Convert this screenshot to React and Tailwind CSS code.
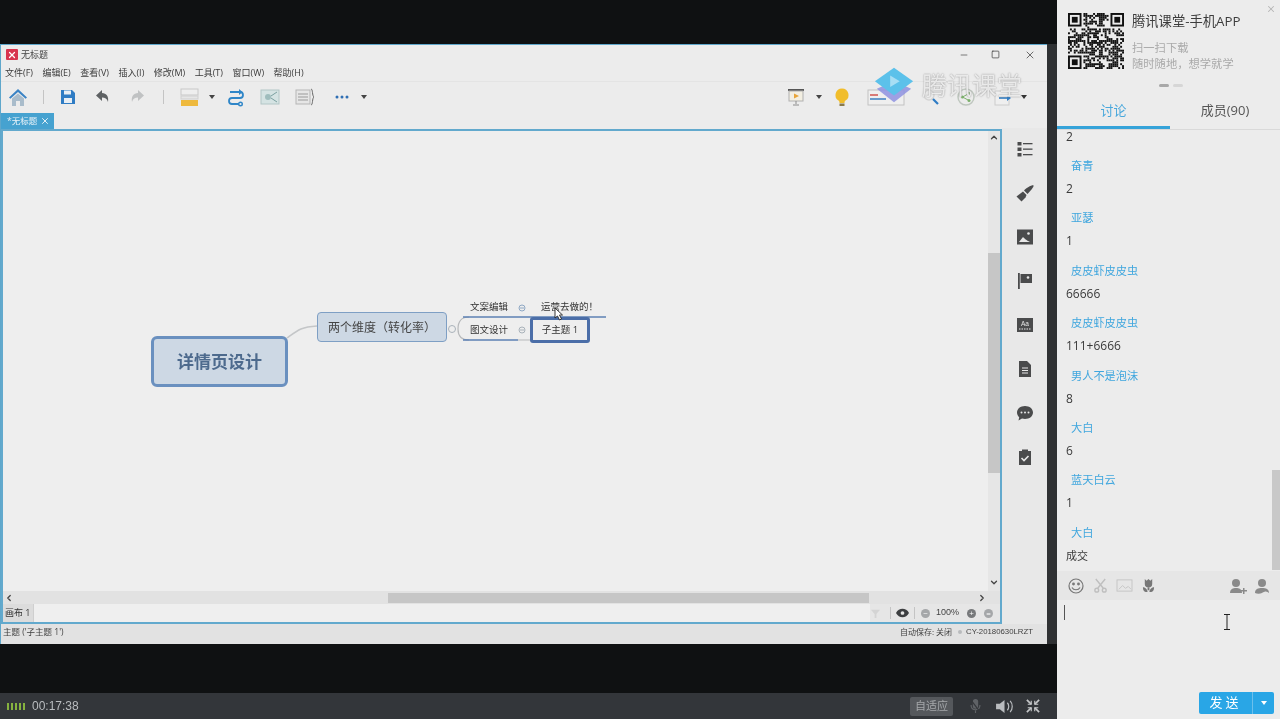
import React from 'react';
import { X, Minus, Square, ChevronUp, ChevronDown, ChevronLeft, ChevronRight } from 'lucide-react';

const messages = [
  { name: '奋青', text: '2' },
  { name: '亚瑟', text: '1' },
  { name: '皮皮虾皮皮虫', text: '66666' },
  { name: '皮皮虾皮皮虫', text: '111+6666' },
  { name: '男人不是泡沫', text: '8' },
  { name: '大白', text: '6' },
  { name: '蓝天白云', text: '1' },
  { name: '大白', text: '成交', cjk: true },
];

const menus = ['文件(F)', '编辑(E)', '查看(V)', '插入(I)', '修改(M)', '工具(T)', '窗口(W)', '帮助(H)'];

// pseudo random modules for the qr code
function QrCode() {
  const n = 29;
  const cells = [];
  let seed = 73;
  for (let y = 0; y < n; y++) {
    for (let x = 0; x < n; x++) {
      seed = (seed * 1103515245 + 12345) & 0x7fffffff;
      const inFinder = (x < 8 && y < 8) || (x > n - 9 && y < 8) || (x < 8 && y > n - 9);
      if (!inFinder && (seed >> 16) % 100 < 54) cells.push(<rect key={x + '-' + y} x={x} y={y} width="1" height="1" />);
    }
  }
  const finder = (x, y) => (
    <g key={x + '' + y}>
      <rect x={x} y={y} width="7" height="7" />
      <rect x={x + 1} y={y + 1} width="5" height="5" fill="#ececec" />
      <rect x={x + 2} y={y + 2} width="3" height="3" />
    </g>
  );
  return (
    <svg viewBox="0 0 29 29" className="w-[56px] h-[56px] shrink-0" fill="#111">
      {cells}
      {finder(0, 0)}
      {finder(22, 0)}
      {finder(0, 22)}
    </svg>
  );
}

function ToolIcon({ children, w = 22 }) {
  return (
    <svg viewBox={`0 0 ${w} 22`} width={w} height={22} className="shrink-0">
      {children}
    </svg>
  );
}

function Caret({ color = '#444' }) {
  return (
    <svg viewBox="0 0 6 4" className="w-[6px] h-[4px] shrink-0">
      <path d="M0 0h6L3 4z" fill={color} />
    </svg>
  );
}

function Toolbar() {
  return (
    <div className="h-[30px] flex items-center pl-[6px] pr-[20px] pb-[1px]">
      <ToolIcon>
        <path d="M11 3 2 11.5l1.400 1.200L11 6l7.600 6.700 1.400-1.200z" fill="#3a83c4" />
        <path d="M5 12.500 11 7.500l6 5V20h-4v-5H9v5H5z" fill="#a9bccb" />
      </ToolIcon>
      <div className="w-px h-[14px] bg-[#c4c4c4] ml-[14px]" />
      <div className="ml-[13px]">
        <ToolIcon>
          <path d="M4 4h11l3 3v11H4z" fill="#2f7cc4" />
          <rect x="7" y="4.500" width="7" height="4" fill="#e8eef4" />
          <rect x="7" y="12" width="8" height="5" fill="#e8eef4" />
        </ToolIcon>
      </div>
      <div className="ml-[13px]">
        <ToolIcon>
          <path d="M10 4 4 9.500l6 5.500v-3.400c3 0 5 1 6 4.400 1-5.500-1.500-8.600-6-9z" fill="#5f6264" />
        </ToolIcon>
      </div>
      <div className="ml-[12px]">
        <ToolIcon>
          <path d="M12 4l6 5.500-6 5.500v-3.400c-3 0-5 1-6 4.400-1-5.500 1.500-8.600 6-9z" fill="#c0c2c3" />
        </ToolIcon>
      </div>
      <div className="w-px h-[14px] bg-[#c4c4c4] ml-[15px]" />
      <div className="ml-[15px]">
        <ToolIcon>
          <rect x="2" y="3" width="17" height="6" fill="#eeeeee" stroke="#c8c8c8" />
          <rect x="2" y="10" width="17" height="3" fill="#e6e6e6" stroke="#cfcfcf" />
          <rect x="2" y="14" width="17" height="6" fill="#eeb93d" />
        </ToolIcon>
      </div>
      <div className="ml-[8px]"><Caret /></div>
      <div className="ml-[10px]">
        <ToolIcon>
          <path d="M5 6h10a3 3 0 0 1 0 6H7a3 3 0 0 0 0 6h7" fill="none" stroke="#2f86c8" strokeWidth="1.800" />
          <path d="M14 3l3.500 3-3.500 3z" fill="#2f86c8" />
          <circle cx="15.500" cy="18" r="1.800" fill="none" stroke="#2f86c8" strokeWidth="1.400" />
        </ToolIcon>
      </div>
      <div className="ml-[12px]">
        <ToolIcon>
          <rect x="2" y="4" width="18" height="14" fill="#d5e3e3" stroke="#b2c6c6" />
          <circle cx="9" cy="11" r="3" fill="#9fbdbd" />
          <path d="M12 10l6-4M12 12l6 4" stroke="#7ba0a0" />
        </ToolIcon>
      </div>
      <div className="ml-[14px]">
        <ToolIcon>
          <rect x="1" y="4" width="14" height="14" fill="#e6e6e6" stroke="#b5b5b5" />
          <path d="M3 8h10M3 11h10M3 14h10" stroke="#9a9a9a" />
          <path d="M16 3c2 0 1 7 3 8-2 1-1 8-3 8" fill="none" stroke="#666" />
        </ToolIcon>
      </div>
      <div className="ml-[14px]">
        <ToolIcon>
          <circle cx="6" cy="11" r="1.500" fill="#2f6fb4" />
          <circle cx="11" cy="11" r="1.500" fill="#2f6fb4" />
          <circle cx="16" cy="11" r="1.500" fill="#2f6fb4" />
        </ToolIcon>
      </div>
      <div className="ml-[8px]"><Caret /></div>

      <div className="ml-auto flex items-center">
        <ToolIcon>
          <rect x="3" y="3" width="16" height="2" fill="#555" />
          <rect x="4" y="5" width="14" height="10" fill="#f3efe2" stroke="#b0b0b0" />
          <path d="M9 7.500l5 2.500-5 2.500z" fill="#e8a53a" />
          <path d="M11 15v3M8 19h6" stroke="#8c8c8c" />
        </ToolIcon>
        <div className="ml-[9px]"><Caret /></div>
        <div className="ml-[9px]">
          <ToolIcon>
            <path d="M11 2.500a6.500 6.500 0 0 0-3.500 12c.8.600 1 1.300 1 2.500h5c0-1.200.2-1.900 1-2.500A6.500 6.500 0 0 0 11 2.500z" fill="#f1bd2b" />
            <rect x="8.500" y="17.500" width="5" height="2.500" fill="#8a7a4a" />
          </ToolIcon>
        </div>
        <div className="ml-[14px]">
          <ToolIcon w={38}>
            <rect x="1" y="4" width="36" height="15" fill="#efefef" stroke="#c2c2c2" />
            <path d="M3 9h8" stroke="#d1544f" strokeWidth="1.500" />
            <path d="M3 13h16" stroke="#3d7fc1" strokeWidth="1.500" />
          </ToolIcon>
        </div>
        <div className="ml-[15px]">
          <ToolIcon>
            <circle cx="9" cy="9" r="5" fill="none" stroke="#d4d4d4" strokeWidth="1.500" />
            <path d="M13 13l5 5" stroke="#2f7cc4" strokeWidth="2.200" />
          </ToolIcon>
        </div>
        <div className="ml-[13px]">
          <ToolIcon>
            <circle cx="11" cy="11" r="8" fill="none" stroke="#bfc7bf" strokeWidth="1.500" />
            <circle cx="7.500" cy="11" r="1.500" fill="#7cb06b" />
            <circle cx="14" cy="7.500" r="1.500" fill="#7cb06b" />
            <circle cx="14" cy="14.500" r="1.500" fill="#7cb06b" />
            <path d="M7.500 11 14 7.500M7.500 11 14 14.500" stroke="#7cb06b" />
          </ToolIcon>
        </div>
        <div className="ml-[16px]">
          <ToolIcon>
            <rect x="2" y="5" width="14" height="14" fill="#efefef" stroke="#cccccc" />
            <path d="M6 12h10" stroke="#2f7cc4" strokeWidth="1.600" />
            <path d="M14 9l4 3-4 3z" fill="#2f7cc4" />
          </ToolIcon>
        </div>
        <div className="ml-[6px]"><Caret color="#333" /></div>
      </div>
    </div>
  );
}

function SideIcon({ children }) {
  return (
    <svg viewBox="0 0 18 18" width={18} height={18} fill="#4a4b4c">
      {children}
    </svg>
  );
}

function SidePanel() {
  return (
    <div className="w-[45px] shrink-0 flex flex-col items-center gap-[26px] pt-[12px] -mt-[1px] bg-[#e8e8e8]">
      <SideIcon>
        <rect x="1.500" y="2" width="4" height="3.500" /><rect x="1.500" y="7.500" width="4" height="3.500" /><rect x="1.500" y="13" width="4" height="3.500" />
        <rect x="7" y="3" width="9.500" height="1.300" /><rect x="7" y="8.500" width="9.500" height="1.300" /><rect x="7" y="14" width="9.500" height="1.300" />
      </SideIcon>
      <SideIcon>
        <path d="M17.500 1.500c.8.900-2.500 5-6 8.500L8 6.500c3.500-3.500 8.600-5.900 9.500-5z" />
        <path d="M7 7.500l3.500 3.500-1 2.500-4 4L.500 12.500z" />
      </SideIcon>
      <SideIcon>
        <path d="M1 1.500h16v15H1z" />
        <circle cx="12.500" cy="5.500" r="1.300" fill="#e8e8e8" />
        <path d="M3 14l4-5c2 2 3 3 7 5z" fill="#e8e8e8" />
      </SideIcon>
      <SideIcon>
        <rect x="2" y="1" width="1.800" height="16" />
        <path d="M4.500 2H16v9H4.500z" />
        <circle cx="12" cy="5.500" r="1.300" fill="#e8e8e8" />
      </SideIcon>
      <svg viewBox="0 0 18 18" width={18} height={18}>
        <rect x="1" y="2" width="16" height="14" fill="#4a4b4c" />
        <text x="9" y="9.500" textAnchor="middle" fontSize="6.500" fontFamily="Liberation Sans" fill="#e8e8e8">Aa</text>
        <path d="M3 13h12" stroke="#e8e8e8" strokeDasharray="1.500 1" />
      </svg>
      <SideIcon>
        <path d="M3 1h8l4 4v12H3z" />
        <path d="M6 8h6M6 10.500h6M6 13h6" stroke="#e8e8e8" />
      </SideIcon>
      <SideIcon>
        <path d="M9 2c4.500 0 8 2.800 8 6.500S13.500 15 9 15c-1 0-2-.1-3-.4L2.500 16.500l.7-3.300C1.800 12 1 10.400 1 8.500 1 4.800 4.500 2 9 2z" />
        <circle cx="5.500" cy="8.500" r="1" fill="#e8e8e8" /><circle cx="9" cy="8.500" r="1" fill="#e8e8e8" /><circle cx="12.500" cy="8.500" r="1" fill="#e8e8e8" />
      </SideIcon>
      <SideIcon>
        <path d="M3 3h3V1.500h6V3h3v14H3z" />
        <path d="M5.500 10l2.500 2.500 4.500-4.500" stroke="#e8e8e8" strokeWidth="1.600" fill="none" />
      </SideIcon>
    </div>
  );
}

// nodes sit on a free canvas, so they are placed by coordinate
function MindMap() {
  return (
    <div className="relative flex-1 min-w-0 text-[#333]">
      <svg className="absolute left-0 top-0 w-[700px] h-[300px]" viewBox="0 0 700 300" fill="none">
        <path d="M284 207C295 199 298 196 314 195" stroke="#c4c6c8" strokeWidth="1.500" />
        <path d="M455 198Q455 186 466 186M455 198Q455 209 466 209" stroke="#b7b9bb" strokeWidth="1.200" />
        <path d="M460 186h55" stroke="#5d81b3" strokeWidth="1.500" />
        <path d="M460 209h55" stroke="#5d81b3" strokeWidth="1.500" />
        <path d="M515 186h88" stroke="#5d81b3" strokeWidth="1.500" />
        <path d="M515 209h13" stroke="#b7b9bb" />
        <circle cx="449" cy="198" r="3.500" stroke="#a9b2ba" />
        <circle cx="519" cy="177" r="3" stroke="#8fa8c4" />
        <path d="M517 177h4" stroke="#8fa8c4" />
        <circle cx="519" cy="199" r="3" stroke="#a9b2ba" />
        <path d="M517 199h4" stroke="#a9b2ba" />
      </svg>
      <div className="absolute left-[148px] top-[205px] w-[137px] h-[51px] flex items-center justify-center pt-[1px] rounded-[6px] border-[3px] border-[#6a90bf] bg-[#cdd8e4] text-[17px] font-bold text-[#4d6a8d]">
        详情页设计
      </div>
      <div className="absolute left-[314px] top-[181px] w-[130px] h-[30px] flex items-center justify-center pt-[1px] rounded-[4px] border-[1.500px] border-[#7e9fc4] bg-[#cdd8e4] text-[12px] text-[#444]">
        两个维度（转化率）
      </div>
      <div className="absolute left-[467px] top-[169px] text-[9.500px] leading-[14px]">文案编辑</div>
      <div className="absolute left-[467px] top-[192px] text-[9.500px] leading-[14px]">图文设计</div>
      <div className="absolute left-[538px] top-[169px] text-[9.500px] leading-[14px] whitespace-nowrap">运营去做的！</div>
      <div className="absolute left-[527px] top-[186px] w-[60px] h-[26px] flex items-center justify-center rounded-[3px] border-[3px] border-[#4b6ea8] bg-[#eeeeee] text-[9.500px]">
        子主题 1
      </div>
      <svg className="absolute left-[551px] top-[176px] w-[10px] h-[14px]" viewBox="0 0 10 14">
        <path d="M1 1v10l2.500-2 2 4 2-1-2-4H8.500z" fill="#fff" stroke="#222" strokeWidth="0.900" />
      </svg>
    </div>
  );
}

function Canvas() {
  return (
    <div className="flex-1 min-w-0 flex flex-col border-2 border-[#62a9cd] bg-[#eeeeee]">
      <div className="flex-1 min-h-0 flex">
        <MindMap />
        <div className="w-[12px] shrink-0 flex flex-col items-center bg-[#e6e6e6] pb-[2px]">
          <ChevronUp size={10} strokeWidth={3} className="text-[#444] h-[13px]" />
          <div className="flex-1 w-full pt-[109px] pb-[103px]">
            <div className="w-full h-full bg-[#c6c6c6]" />
          </div>
          <ChevronDown size={10} strokeWidth={3} className="text-[#444] h-[13px]" />
        </div>
      </div>
      <div className="h-[13px] shrink-0 flex items-center bg-[#e2e2e2]">
        <ChevronLeft size={10} strokeWidth={3} className="text-[#444] ml-[1px]" />
        <div className="h-[10px] w-[481px] ml-[374px] bg-[#c6c6c6]" />
        <ChevronRight size={10} strokeWidth={3} className="text-[#444] ml-auto mr-[13px]" />
      </div>
      <div className="h-[18px] shrink-0 flex items-center bg-[#e6e6e6] text-[9px] text-[#333]">
        <div className="w-[30px] h-full pl-[2px] flex items-center bg-[#dcdcdc]">画布 1</div>
        <div className="w-[838px] h-full bg-[#efefef] border-l border-[#cfcfcf]" />
        <svg viewBox="0 0 12 12" className="w-[11px] h-[11px] ml-auto">
          <path d="M1 2h10L7 6.500V11H5V6.500z" fill="#d4d4d4" />
        </svg>
        <div className="w-px h-[12px] bg-[#c4c4c4] ml-[9px]" />
        <svg viewBox="0 0 14 10" className="w-[13px] h-[10px] ml-[5px]">
          <path d="M0 5c3-6 11-6 14 0-3 6-11 6-14 0z" fill="#3d3f41" />
          <circle cx="7" cy="5" r="2" fill="#e6e6e6" />
        </svg>
        <div className="w-px h-[12px] bg-[#c4c4c4] ml-[5px]" />
        <div className="w-[9px] h-[9px] rounded-full bg-[#a5a7a9] ml-[6px] flex items-center justify-center text-white text-[8px] leading-none">−</div>
        <span className="ml-[6px] text-[9px] text-[#444] font-['Liberation_Sans',sans-serif]">100%</span>
        <div className="w-[9px] h-[9px] rounded-full bg-[#77797b] ml-[8px] flex items-center justify-center text-white text-[8px] leading-none">+</div>
        <div className="w-[9px] h-[9px] rounded-full bg-[#a5a7a9] ml-[8px] mr-[7px] flex items-center justify-center text-white text-[8px] leading-none">=</div>
      </div>
    </div>
  );
}

function AppWindow() {
  return (
    <div className="relative w-[1047px] h-[600px] flex flex-col bg-[#ececec] border-t border-l border-[#5fa7cb]">
      <div className="h-[19px] shrink-0 flex items-center pl-[5px] text-[9px] text-[#444]">
        <div className="w-[12px] h-[11px] bg-[#d8344f] flex items-center justify-center rounded-[1px]">
          <X size={10} strokeWidth={3} className="text-white" />
        </div>
        <span className="ml-[3px]">无标题</span>
        <div className="ml-auto flex items-center text-[#333]">
          <Minus size={10} strokeWidth={1.500} />
          <Square size={9} strokeWidth={1.800} className="ml-[22px]" />
          <X size={12} strokeWidth={1.400} className="ml-[24px] mr-[11px]" />
        </div>
      </div>
      <div className="h-[18px] shrink-0 flex items-center pl-[4px] gap-[9.500px] text-[9px] text-[#3b3b3b] border-b border-[#e4e4e4]">
        {menus.map((m) => <span key={m}>{m}</span>)}
      </div>
      <Toolbar />
      <div className="h-[17px] shrink-0 flex items-end">
        <div className="h-[16px] w-[53px] bg-[#46a2d0] flex items-center pl-[6px] text-[8.500px] text-[#e8f2f8]">
          *无标题
          <X size={10} strokeWidth={2} className="ml-[3px] text-white" />
        </div>
      </div>
      <div className="h-[495px] shrink-0 flex">
        <Canvas />
        <SidePanel />
      </div>
      <div className="flex-1 flex items-center pl-[2px] pr-[14px] pb-[4px] bg-[#e2e2e2] text-[8px] text-[#3f3f3f]">
        <span className="text-[8.500px]">主题 ('子主题 1')</span>
        <span className="ml-auto">自动保存: 关闭</span>
        <span className="w-[4px] h-[4px] rounded-full bg-[#b9bbbd] ml-[6px]" />
        <span className="ml-[4px] text-[7.800px] font-['Liberation_Sans',sans-serif]">CY-20180630LRZT</span>
      </div>

      {/* video watermark over the toolbar */}
      <div className="absolute left-[872px] top-[22px] flex items-center pointer-events-none">
        <svg viewBox="0 0 44 36" className="w-[42px] h-[36px]">
          <path d="M22 14 40 22 22 36 4 22z" fill="#8e92e0" fillOpacity="0.85" />
          <path d="M22 0 42 14 22 29 2 14z" fill="#5cc1ea" />
          <path d="M18 8l10 6-10 6z" fill="#a8def4" />
        </svg>
        <span className="ml-[7px] text-[25px] leading-none text-white/80 [text-shadow:0_0_1.500px_#777]">腾讯课堂</span>
      </div>
    </div>
  );
}

function ChatPanel() {
  return (
    <div className="w-[223px] shrink-0 h-full flex flex-col bg-[#ececec] text-[#333]">
      <div className="relative h-[92px] shrink-0 flex pl-[11px] pt-[13px]">
        <QrCode />
        <div className="ml-[8px]">
          <div className="text-[13.300px] leading-[17px] text-[#3c3c3c]">腾讯课堂-手机APP</div>
          <div className="mt-[10px] text-[11.300px] leading-[16px] text-[#a9a9a9]">扫一扫下载</div>
          <div className="text-[11.300px] leading-[16px] text-[#a9a9a9]">随时随地，想学就学</div>
        </div>
        <X size={10} strokeWidth={2.500} className="absolute right-[4px] top-[4px] text-[#b5b5b5]" />
        <div className="absolute left-[102px] top-[84px] flex gap-[4px]">
          <div className="w-[10px] h-[3px] rounded-full bg-[#a8a8a8]" />
          <div className="w-[10px] h-[3px] rounded-full bg-[#d6d6d6]" />
        </div>
      </div>
      <div className="h-[38px] shrink-0 flex text-[13px] border-b border-[#d9d9d9]">
        <div className="w-[113px] flex items-center justify-center border-b-[3px] border-[#36a3d9] text-[#4aa8dc] pt-[3px]">讨论</div>
        <div className="flex-1 flex items-center justify-center text-[#555]">成员(90)</div>
      </div>
      <div className="relative h-[441px] shrink-0 overflow-hidden">
        <div className="pl-[9px] text-[12px]">
          <div className="h-[19px] leading-[13px] text-[#3a3a3a]">2</div>
          {messages.map((m) => (
            <div key={m.name + m.text} className="h-[52.400px]">
              <div className="h-[28px] pt-[7px] pl-[5px] leading-[20px] text-[11.200px] text-[#3fa6de]">{m.name}</div>
              <div className={`h-[24px] leading-[24px] text-[#3a3a3a] ${m.cjk ? 'text-[11px]' : ''}`}>{m.text}</div>
            </div>
          ))}
        </div>
        <div className="absolute right-0 top-[340px] w-[8px] h-[100px] bg-[#c8c8c8]" />
      </div>
      <div className="h-[29px] shrink-0 flex items-center pl-[11px] pr-[10px] bg-[#e6e6e6] text-[#777]">
        <svg viewBox="0 0 16 16" className="w-[16px] h-[16px]" fill="none" stroke="#777" strokeWidth="1.200">
          <circle cx="8" cy="8" r="7" />
          <circle cx="5.500" cy="6" r="0.800" fill="#777" />
          <circle cx="10.500" cy="6" r="0.800" fill="#777" />
          <path d="M4 9.500c1.500 3 6.500 3 8 0" />
        </svg>
        <svg viewBox="0 0 16 16" className="w-[15px] h-[15px] ml-[9px]" fill="none" stroke="#bfbfbf" strokeWidth="1.500">
          <path d="M3 1l8 10M13 1 5 11" />
          <circle cx="4" cy="13" r="2" />
          <circle cx="12" cy="13" r="2" />
        </svg>
        <svg viewBox="0 0 18 16" className="w-[17px] h-[15px] ml-[8px]" fill="none" stroke="#c4c4c4">
          <rect x="1" y="2" width="16" height="12" />
          <path d="M3 12l4-4 3 3 3-2 3 3" />
        </svg>
        <svg viewBox="0 0 14 16" className="w-[13px] h-[15px] ml-[9px]" fill="#777">
          <path d="M3 1l2 2 2-2 2 2 2-2v5a4 4 0 0 1-8 0z" />
          <path d="M6 10h2v3H6zM1 10c2 0 5 2 5 5H4c-2 0-3-2-3-5zM13 10c-2 0-5 2-5 5h2c2 0 3-2 3-5z" />
        </svg>
        <svg viewBox="0 0 18 16" className="w-[18px] h-[16px] ml-auto" fill="#8a8a8a">
          <circle cx="7" cy="5" r="4" />
          <path d="M1 15c0-4 3-5 6-5s6 1 6 5z" />
          <path d="M14 10h1.500v2H18v1.500h-2.500V16H14v-2.500h-2V12h2z" />
        </svg>
        <svg viewBox="0 0 16 16" className="w-[16px] h-[16px] ml-[7px]" fill="#8a8a8a">
          <circle cx="8" cy="5" r="4" />
          <path d="M1 15c0-4 3-5 7-5s7 1 7 5c-2-2-4-2-7 0-2 1-5 1-7 0z" />
        </svg>
      </div>
      <div className="relative flex-1 bg-[#ececec]">
        <div className="absolute left-[7px] top-[5px] w-px h-[15px] bg-[#555]" />
        <svg viewBox="0 0 8 16" className="absolute left-[166px] top-[14px] w-[8px] h-[16px]" fill="none" stroke="#222">
          <path d="M1 .500h6M1 15.500h6M4 .500v15" />
        </svg>
        <div className="absolute right-[6px] bottom-[5px] w-[75px] h-[22px] flex rounded-[2px] bg-[#29a6e6] text-white">
          <div className="flex-1 flex items-center justify-center text-[13px] tracking-[3px] border-r border-[#6cc0ec]">发送</div>
          <div className="w-[21px] flex items-center justify-center"><Caret color="#fff" /></div>
        </div>
      </div>
    </div>
  );
}

export default function App() {
  return (
    <div className="w-[1280px] h-[719px] overflow-hidden flex bg-[#ececec] blur-[0.4px] font-['Open_Sans','Noto_Sans_CJK_SC',sans-serif]">
      <div className="w-[1057px] shrink-0 flex flex-col bg-[#0f1112]">
        <div className="h-[44px] shrink-0" />
        <div className="flex h-[600px] shrink-0">
          <AppWindow />
          <div className="flex-1 bg-[#2f3133]" />
        </div>
        <div className="flex-1" />
        <div className="h-[26px] shrink-0 flex items-center pl-[7px] pr-[17px] bg-[#33363a] text-[#b9bcbf]">
          <div className="flex gap-[2px] items-center">
            {[0, 1, 2, 3, 4].map((i) => <div key={i} className="w-[2px] h-[7px] bg-[#86b23f]" />)}
          </div>
          <span className="ml-[7px] text-[12px] font-['Liberation_Sans',sans-serif]">00:17:38</span>
          <div className="ml-auto w-[43px] h-[19px] rounded-[2px] bg-[#55585c] flex items-center justify-center text-[11px] text-[#a5a8ab]">自适应</div>
          <svg viewBox="0 0 14 18" className="w-[13px] h-[16px] ml-[16px]" fill="#5f6266">
            <rect x="4" y="1" width="6" height="11" rx="3" />
            <path d="M2 8c0 7 10 7 10 0M7 14v3" fill="none" stroke="#5f6266" strokeWidth="1.300" />
            <path d="M1 1l12 16" stroke="#33363a" strokeWidth="1.300" />
          </svg>
          <svg viewBox="0 0 20 16" className="w-[19px] h-[15px] ml-[13px]" fill="#b9bcbf">
            <path d="M1 5h4l5-4v14l-5-4H1z" />
            <path d="M13 4c2 2 2 6 0 8M16 2c3 3 3 9 0 12" fill="none" stroke="#b9bcbf" strokeWidth="1.300" />
          </svg>
          <svg viewBox="0 0 16 16" className="w-[14px] h-[14px] ml-[12px]" fill="none" stroke="#c5c7c9" strokeWidth="2">
            <path d="M1 1l5 5M15 1l-5 5M1 15l5-5M15 15l-5-5" />
            <path d="M6 2v4H2M10 2v4h4M6 14v-4H2M10 14v-4h4" strokeWidth="1.300" />
          </svg>
        </div>
      </div>
      <ChatPanel />
    </div>
  );
}
